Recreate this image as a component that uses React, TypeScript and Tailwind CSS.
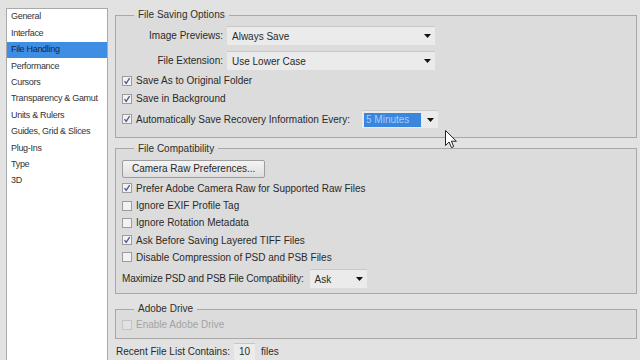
import React from "react";

const navItems = [
  "General",
  "Interface",
  "File Handling",
  "Performance",
  "Cursors",
  "Transparency & Gamut",
  "Units & Rulers",
  "Guides, Grid & Slices",
  "Plug-Ins",
  "Type",
  "3D",
];

const Arrow = () => (
  <svg width="7" height="4" viewBox="0 0 7 4" className="shrink-0">
    <path d="M0 0h7L3.5 4z" fill="#111" />
  </svg>
);

const CheckBox: React.FC<{ checked?: boolean; disabled?: boolean }> = ({ checked, disabled }) => (
  <span
    className={`w-[10px] h-[10px] border flex items-center justify-center shrink-0 ${
      disabled ? "border-[#c4c4c4] bg-[#e2e2e2]" : "border-[#9c9c9c] bg-[#f2f2f2]"
    }`}
  >
    {checked && (
      <svg width="8" height="8" viewBox="0 0 8 8">
        <path d="M1.5 4.2 3.2 6.3 6.6 1.2" fill="none" stroke="#4a5c8c" strokeWidth="1.3" />
      </svg>
    )}
  </span>
);

const CheckRow: React.FC<{ label: string; checked?: boolean; disabled?: boolean; h?: string }> = ({
  label,
  checked,
  disabled,
  h = "h-[17.25px]",
}) => (
  <div className={`flex items-center gap-[4px] whitespace-nowrap ${h}`}>
    <CheckBox checked={checked} disabled={disabled} />
    <span className={disabled ? "text-[#a3a3a3]" : ""}>{label}</span>
  </div>
);

const Select: React.FC<{ value: string; className?: string }> = ({ value, className }) => (
  <div
    className={`flex items-center justify-between shrink-0 bg-[#ebebeb] border-t border-[#c9c9c9] pl-[5px] pr-[4px] ${className}`}
  >
    <span>{value}</span>
    <Arrow />
  </div>
);

const Group: React.FC<{ title: string; className?: string; children: React.ReactNode }> = ({
  title,
  className,
  children,
}) => (
  <fieldset className={`border border-[#a8a8a8] bg-[#dcdcdc] pl-[6px] ${className}`}>
    <legend className="ml-[12px] px-[4px] leading-[14px] text-[#2e2e2e]">{title}</legend>
    {children}
  </fieldset>
);

export default function App() {
  return (
    <div
      className="relative w-[640px] h-[360px] overflow-hidden bg-[#e2e2e2] text-[10px] text-[#2a2a2a] flex whitespace-nowrap"
      style={{ fontFamily: '"Liberation Sans", Arial, sans-serif' }}
    >
      <div className="ml-[6px] mt-[8px] w-[102px] h-[360px] shrink-0 bg-white border border-[#a9a9a9] flex flex-col text-[9px] tracking-[-0.3px] text-[#333]">
        {navItems.map((item) => (
          <div
            key={item}
            className={`h-[16.4px] flex items-center pl-[4px] ${
              item === "File Handling" ? "bg-[#3e8fe3] text-[#10294d]" : ""
            }`}
          >
            {item}
          </div>
        ))}
      </div>

      <div className="ml-[7px] mt-[8px] w-[522px] flex flex-col">
        <Group title="File Saving Options" className="h-[131px]">
          <div className="flex flex-col pt-[4px]">
            <div className="flex items-center h-[19px]">
              <span className="w-[105px] text-right pr-[4px]">Image Previews:</span>
              <Select value="Always Save" className="w-[208px] h-[19px]" />
            </div>
            <div className="flex items-center h-[19px] mt-[6px]">
              <span className="w-[105px] text-right pr-[4px]">File Extension:</span>
              <Select value="Use Lower Case" className="w-[208px] h-[19px]" />
            </div>
            <div className="mt-[2px]">
              <CheckRow label="Save As to Original Folder" checked h="h-[17px]" />
              <CheckRow label="Save in Background" checked h="h-[19px]" />
            </div>
            <div className="flex items-center h-[20px] mt-[1px]">
              <CheckBox checked />
              <span className="ml-[4px] w-[226px]">Automatically Save Recovery Information Every:</span>
              <div className="flex items-center justify-between bg-[#ebebeb] border-t border-[#c9c9c9] h-[18px] w-[76px] pl-[2px] pr-[4px]">
                <span className="bg-[#3a86df] text-[#a9cdf6] h-[14px] w-[57px] leading-[14px] pl-[2px]">
                  5 Minutes
                </span>
                <Arrow />
              </div>
            </div>
          </div>
        </Group>

        <Group title="File Compatibility" className="h-[154px] mt-[4px]">
          <div className="flex flex-col pt-[4px]">
            <button className="self-start h-[18px] px-[9px] border border-[#9d9d9d] rounded-[2px] bg-gradient-to-b from-[#f4f4f4] to-[#dedede] leading-[16px]">
              Camera Raw Preferences...
            </button>
            <div className="mt-[2px]">
              <CheckRow label="Prefer Adobe Camera Raw for Supported Raw Files" checked />
              <CheckRow label="Ignore EXIF Profile Tag" />
              <CheckRow label="Ignore Rotation Metadata" />
              <CheckRow label="Ask Before Saving Layered TIFF Files" checked />
              <CheckRow label="Disable Compression of PSD and PSB Files" />
            </div>
            <div className="flex items-center h-[19px] mt-[3px]">
              <span className="tracking-[-0.2px]">Maximize PSD and PSB File Compatibility:</span>
              <Select value="Ask" className="ml-[6px] w-[57px] h-[19px]" />
            </div>
          </div>
        </Group>

        <Group title="Adobe Drive" className="h-[37px] mt-[8px]">
          <CheckRow label="Enable Adobe Drive" disabled h="h-[17px]" />
        </Group>

        <div className="flex items-center h-[18px] mt-[3px] pl-[1px]">
          <span>Recent File List Contains:</span>
          <span className="ml-[4px] w-[21px] h-[17px] bg-[#ececec] border-t border-[#c6c6c6] flex items-center justify-center">
            10
          </span>
          <span className="ml-[6px]">files</span>
        </div>
      </div>

      <svg
        className="absolute left-[445px] top-[130px]"
        width="12"
        height="19"
        viewBox="0 0 12 19"
      >
        <path d="M0.5 0.5v15l3.6-3.5 2.4 5.6 2.2-1-2.3-5.4h5z" fill="#fff" stroke="#222" strokeWidth="1" />
      </svg>
    </div>
  );
}
